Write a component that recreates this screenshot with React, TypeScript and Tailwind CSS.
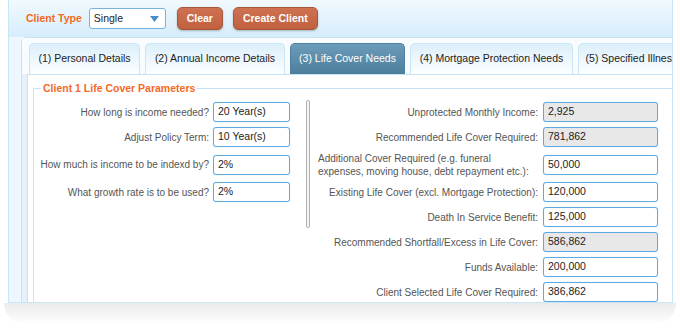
import React from "react";

const leftRows = [
  { label: "How long is income needed?", value: "20 Year(s)" },
  { label: "Adjust Policy Term:", value: "10 Year(s)" },
  { label: "How much is income to be indexd by?", value: "2%", tall: true },
  { label: "What growth rate is to be used?", value: "2%" },
];

const rightRows = [
  { label: "Unprotected Monthly Income:", value: "2,925", readOnly: true },
  { label: "Recommended Life Cover Required:", value: "781,862", readOnly: true },
  { label: "", value: "50,000", tall: true },
  { label: "Existing Life Cover (excl. Mortgage Protection):", value: "120,000" },
  { label: "Death In Service Benefit:", value: "125,000" },
  { label: "Recommended Shortfall/Excess in Life Cover:", value: "586,862", readOnly: true },
  { label: "Funds Available:", value: "200,000" },
  { label: "Client Selected Life Cover Required:", value: "386,862" },
];

const tabs = [
  { name: "(1) Personal Details", w: "w-[111px]" },
  { name: "(2) Annual Income Details", w: "w-[140px]" },
  { name: "(3) Life Cover Needs", w: "w-[115px]", active: true },
  { name: "(4) Mortgage Protection Needs", w: "w-[163px]" },
  { name: "(5) Specified Illness Needs", w: "w-[140px]" },
];

const Field = ({ value, readOnly, width }: { value: string; readOnly?: boolean; width: string }) => (
  <div
    className={`${width} h-[20px] shrink-0 flex items-center pl-[4px] rounded-[3px] border border-[#5fabdf] shadow-[0_0_1px_#9fd0f0] text-[10.5px] text-[#222] ${
      readOnly ? "bg-[#e8e8e8]" : "bg-white"
    }`}
  >
    {value}
  </div>
);

export default function App() {
  return (
    <div className="w-[680px] h-[330px] bg-white overflow-hidden pl-[8px] font-['Liberation_Sans',Arial,sans-serif]">
      <div className="w-[665px] h-[303px] overflow-hidden border-l border-r border-b border-[#c9e6f7] bg-[#eef7fd] flex flex-col">
        {/* Header */}
        <div className="h-[37px] shrink-0 flex items-center pl-[17px] bg-linear-to-b from-[#f1f9fe] to-[#d6edfb]">
          <span className="text-[10.5px] font-bold text-[#f26a1f]">Client Type</span>
          <div className="ml-[7px] w-[77px] h-[21px] flex items-center justify-between pl-[4px] pr-[6px] rounded-[3px] border border-[#78b3de] bg-white text-[10.5px] text-[#222]">
            <span>Single</span>
            <svg width="9" height="6" viewBox="0 0 9 6">
              <path d="M0 0 L9 0 L4.5 6 Z" fill="#4d8cc6" />
            </svg>
          </div>
          <button className="ml-[11px] w-[46px] h-[23px] rounded-[5px] border border-[#a9573b] bg-linear-to-b from-[#cf7252] to-[#c0603f] shadow-[0_1px_2px_rgba(0,0,0,0.25)] text-[10.5px] font-bold text-white">
            Clear
          </button>
          <button className="ml-[10px] w-[85px] h-[23px] rounded-[5px] border border-[#a9573b] bg-linear-to-b from-[#cf7252] to-[#c0603f] shadow-[0_1px_2px_rgba(0,0,0,0.25)] text-[10.5px] font-bold text-white">
            Create Client
          </button>
        </div>

        {/* Tab container */}
        <div className="ml-[12px] w-[720px] flex-1 rounded-tl-[5px] border border-[#c5e3f5] bg-[#e5f2fb] flex flex-col">
          <div className="flex items-end gap-[5px] pl-[7px] pt-[5px] bg-[#f8fcff]">
            {tabs.map((t) => (
              <div
                key={t.name}
                className={`${t.w} h-[31px] shrink-0 flex items-center justify-center rounded-t-[5px] border border-b-0 text-[10.5px] whitespace-nowrap ${
                  t.active
                    ? "border-[#4f809d] bg-linear-to-b from-[#6c9cb9] to-[#4c7e9b] text-white"
                    : "border-[#c9e5f6] bg-linear-to-b from-[#dceffa] to-[#fcfeff] text-[#222]"
                }`}
              >
                {t.name}
              </div>
            ))}
          </div>

          {/* Content panel */}
          <div className="ml-[5px] flex-1 border border-[#c5e3f5] bg-white pl-[5px]">
            <fieldset className="mt-[7px] w-[700px] border border-[#c5e3f5] h-[240px]">
              <legend className="ml-[7px] px-[2px] text-[10.5px] leading-[13px] font-bold text-[#f26a1f]">
                Client 1 Life Cover Parameters
              </legend>
              <div className="flex items-start">
                {/* Left column */}
                <div className="w-[256px] pt-[7px] flex flex-col gap-[5px]">
                  {leftRows.map((r) => (
                    <div key={r.label} className={`${r.tall ? "h-[25px]" : "h-[20px]"} flex items-center justify-end gap-[4px]`}>
                      <span className="text-[10px] text-[#555] whitespace-nowrap">{r.label}</span>
                      <Field value={r.value} width="w-[77px]" />
                    </div>
                  ))}
                </div>

                {/* Divider */}
                <div className="ml-[16px] mt-[5px] w-[4px] h-[128px] rounded-full border border-[#b3b3b3] bg-[#f3f3f3]" />

                {/* Right column */}
                <div className="ml-[6px] w-[342px] pt-[7px] flex flex-col gap-[5px]">
                  {rightRows.map((r, i) => (
                    <div key={i} className={`${r.tall ? "h-[25px]" : "h-[20px]"} flex items-center`}>
                      {r.tall ? (
                        <span className="flex-1 pl-[2px] text-[10px] leading-[13px] text-[#555]">
                          Additional Cover Required (e.g. funeral
                          <br />
                          expenses, moving house, debt repayment etc.):
                        </span>
                      ) : (
                        <span className="flex-1 pr-[5px] text-right text-[10px] text-[#555] whitespace-nowrap">{r.label}</span>
                      )}
                      <Field value={r.value} readOnly={r.readOnly} width="w-[115px]" />
                    </div>
                  ))}
                </div>
              </div>
            </fieldset>
          </div>
        </div>
      </div>
      {/* shadow under the frame */}
      <div className="-ml-[4px] w-[672px] h-[22px] rounded-b-[30px] bg-linear-to-b from-[#ebebeb] to-white" />
    </div>
  );
}
